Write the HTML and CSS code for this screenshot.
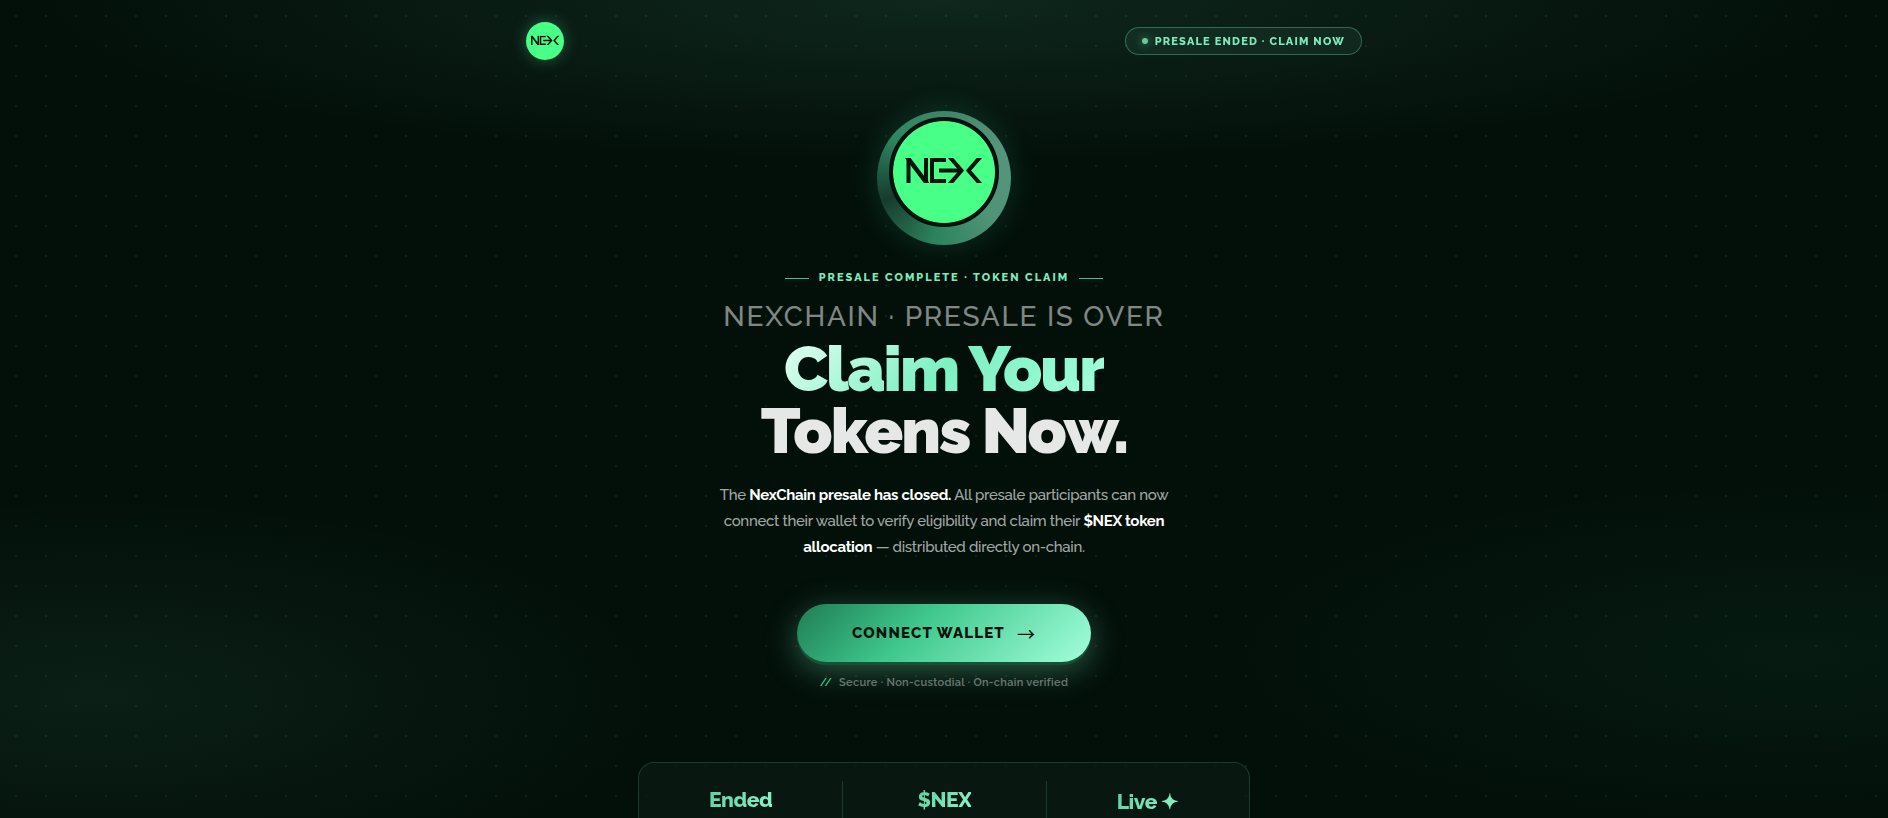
FILE: index.html
```html
<!DOCTYPE html>
<html lang="en">
  <head>
    <meta charset="UTF-8" />
    <meta name="viewport" content="width=device-width, initial-scale=1.0" />
    <title>NexChain - Claim Your Tokens</title>
    <link rel="stylesheet" href="styles.css">
  </head>
  <body>
    <!-- NEX wordmark, shared by the header and the hero coin -->
    <svg class="sprite" aria-hidden="true">
      <symbol id="nex" viewBox="0 0 102 102">
        <clipPath id="band"><rect x="0" y="37" width="102" height="25" /></clipPath>
        <circle cx="51" cy="51" r="51" fill="#48ff88" />
        <g fill="none" stroke="#03120b" stroke-width="4" clip-path="url(#band)">
          <path d="M15.500 64V36M33 64V36" />
          <path d="M14 36L34.500 63" stroke-width="4.500" />
          <path d="M53 39H39V60H53" />
          <path d="M46 49.500H69" />
          <path d="M55 34L68.500 49.500L55 65" />
          <path d="M89 34L75.500 49.500L89 65" />
        </g>
      </symbol>
    </svg>

    <header>
      <a class="logo" href="#" aria-label="NexChain">
        <svg viewBox="0 0 102 102"><use href="#nex" /></svg>
      </a>
      <div class="status"><span class="dot"></span>Presale Ended · Claim Now</div>
    </header>

    <main>
      <div class="coin">
        <svg viewBox="0 0 102 102"><use href="#nex" /></svg>
      </div>
      <p class="eyebrow">Presale Complete · Token Claim</p>
      <p class="overline">NEXCHAIN · PRESALE IS OVER</p>
      <h1><span class="shine">Claim Your</span><span class="plain">Tokens Now.</span></h1>
      <p class="intro">
        The <strong>NexChain presale has closed.</strong> All presale participants can now
        connect their wallet to verify eligibility and claim their <strong>$NEX token
        allocation</strong> — distributed directly on-chain.
      </p>
      <button class="connect" type="button">Connect Wallet <span class="arrow">→</span></button>
      <p class="note"><span class="slashes">//</span>Secure · Non-custodial · On-chain verified</p>

      <section class="stats">
        <div class="stat"><span class="value">Ended</span></div>
        <div class="stat"><span class="value">$NEX</span></div>
        <div class="stat"><span class="value">Live <span class="star">✦</span></span></div>
      </section>
    </main>
  </body>
</html>
```
FILE: styles.css
```css
* {
  box-sizing: border-box;
  margin: 0;
  padding: 0;
}

body {
  min-height: 100vh;
  font-family: "Raleway", "Lato", sans-serif;
  color: #ffffff;
  /* dot grid over three soft glows */
  background:
    radial-gradient(circle at 16px 16px, rgba(150, 235, 195, 0.08) 1px, transparent 1px) 0 0 / 30px 30px,
    radial-gradient(ellipse 80% 33% at 50% 0%, rgba(110, 225, 175, 0.11), transparent 60%),
    radial-gradient(ellipse 50% 40% at 5% 85%, rgba(100, 210, 165, 0.08), transparent 60%),
    radial-gradient(ellipse 50% 35% at 95% 80%, rgba(50, 190, 135, 0.06), transparent 60%),
    #03100a;
  background-attachment: fixed;
}

/* the page scrolls without a visible bar */
html {
  scrollbar-width: none;
}

.sprite {
  position: absolute;
  width: 0;
  height: 0;
}

/* Header */
header {
  display: flex;
  justify-content: space-between;
  align-items: center;
  max-width: 900px;
  margin: 0 auto;
  padding: 22px 32px;
}

.logo {
  display: block;
  width: 38px;
  height: 38px;
  border-radius: 50%;
  box-shadow: 0 0 16px rgba(90, 220, 160, 0.35);
}

.logo svg {
  display: block;
  width: 100%;
}

.status {
  display: flex;
  align-items: center;
  gap: 7px;
  padding: 0 16px;
  height: 28px;
  border: 1px solid rgba(94, 205, 158, 0.4);
  border-radius: 14px;
  background: rgba(110, 205, 160, 0.08);
  backdrop-filter: blur(12px);
  color: #7aebbb;
  font-size: 11px;
  font-weight: 800;
  letter-spacing: 0.11em;
  text-transform: uppercase;
}

.dot {
  width: 6px;
  height: 6px;
  border-radius: 50%;
  background: #68c99e;
  box-shadow: 0 0 8px #3fa87b;
}

/* Hero */
main {
  display: flex;
  flex-direction: column;
  align-items: center;
  padding: 29px 24px 0;
  text-align: center;
}

.coin {
  width: 134px;
  height: 134px;
  padding: 6px 12px;
  border-radius: 50%;
  background: conic-gradient(#3f8468, #55957b 60deg, #4f9478 130deg, #2b825c 190deg, #173c2d 250deg, #1d5540 270deg, #2f8762 310deg, #3f8468);
  box-shadow: 0 0 30px rgba(61, 190, 140, 0.2);
}

.coin svg {
  display: block;
  width: 110px;
  border: 4px solid #03120b;
  border-radius: 50%;
}

.eyebrow {
  display: flex;
  align-items: center;
  gap: 10px;
  margin-top: 26px;
  color: #7aebbb;
  font-size: 11px;
  font-weight: 800;
  line-height: 14px;
  letter-spacing: 2px;
  text-transform: uppercase;
}

.eyebrow::before,
.eyebrow::after {
  content: "";
  width: 24px;
  height: 1px;
  background: #3cc48a;
}

.overline {
  margin-top: 14px;
  color: rgba(255, 255, 255, 0.5);
  font-size: 28px;
  font-weight: 500;
  line-height: 36px;
  letter-spacing: 0.06em;
}

h1 {
  margin-top: 3px;
  font-size: 64px;
  font-weight: 900;
  line-height: 62px;
  letter-spacing: -0.03em;
}

h1 span {
  display: block;
}

.shine {
  width: fit-content;
  margin: 0 auto;
  background: linear-gradient(135deg, #e3fff3, #7df0c2 50%, #a3ffdc);
  -webkit-background-clip: text;
  background-clip: text;
  color: transparent;
}

.plain {
  color: #e6e8e7;
}

.intro {
  max-width: 480px;
  margin-top: 20px;
  color: rgba(255, 255, 255, 0.65);
  font-size: 15px;
  font-weight: 500;
  line-height: 26px;
  letter-spacing: -0.02em;
}

.intro strong {
  color: #ffffff;
}

/* Call to action */
.connect {
  display: flex;
  align-items: center;
  justify-content: center;
  gap: 12px;
  height: 58px;
  margin-top: 44px;
  padding: 0 55px;
  border: none;
  border-radius: 29px;
  background: linear-gradient(135deg, #1f7d55, #3fc78c 40%, #a3ffdc);
  box-shadow: 0 3px 0 #155236, 0 8px 32px rgba(122, 235, 187, 0.35);
  color: #03120b;
  font-family: inherit;
  font-size: 15px;
  font-weight: 800;
  letter-spacing: 0.08em;
  text-transform: uppercase;
  cursor: pointer;
}

.arrow {
  font-family: "Noto Sans CJK JP", sans-serif;
  font-size: 18px;
  font-weight: 400;
}

.note {
  display: flex;
  gap: 7px;
  margin-top: 14px;
  color: rgba(255, 255, 255, 0.4);
  font-size: 11px;
  font-weight: 600;
  line-height: 14px;
  letter-spacing: 0.03em;
}

.slashes {
  color: #3cc48a;
}

/* Stats panel */
.stats {
  display: grid;
  grid-template-columns: repeat(3, 1fr);
  width: 100%;
  max-width: 612px;
  margin-top: 72px;
  padding: 18px 0;
  border: 1px solid rgba(94, 205, 158, 0.2);
  border-radius: 16px;
  background: rgba(180, 255, 220, 0.035);
  backdrop-filter: blur(12px);
}

.stat {
  height: 72px;
  padding-top: 6px;
}

.stat + .stat {
  border-left: 1px solid rgba(94, 205, 158, 0.2);
}

.value {
  background: linear-gradient(135deg, #5ccf9e, #8ff5ca);
  -webkit-background-clip: text;
  background-clip: text;
  color: transparent;
  font-size: 21px;
  font-weight: 800;
  letter-spacing: -0.02em;
}

.star {
  line-height: 30px;
}
```
